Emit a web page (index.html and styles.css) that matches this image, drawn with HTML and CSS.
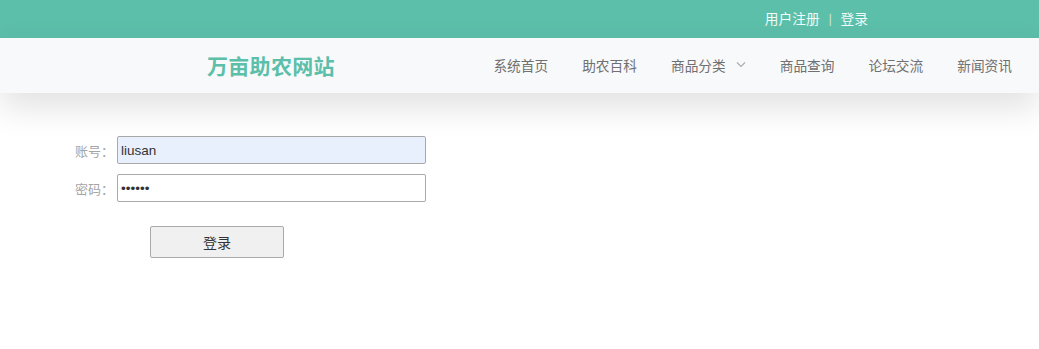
FILE: index.html
```html
<!DOCTYPE html>
<html lang="zh-CN">
<head>
    <meta charset="UTF-8">
    <meta name="viewport" content="width=device-width, initial-scale=1.0">
    <title>万亩助农网站 - 登录</title>
    <link rel="stylesheet" href="styles.css">
</head>
<body>

<div class="topbar">
    <a href="#">用户注册</a>
    <span class="sep">|</span>
    <a href="#">登录</a>
</div>

<header class="navbar">
    <div class="logo">万亩助农网站</div>
    <nav class="menu">
        <a href="#">系统首页</a>
        <a href="#">助农百科</a>
        <a href="#" class="has-sub">商品分类
            <svg width="10" height="7" viewBox="0 0 10 7"><path d="M1 1.5 L5 5.5 L9 1.5" fill="none" stroke="#aaa" stroke-width="1.1"/></svg>
        </a>
        <a href="#">商品查询</a>
        <a href="#">论坛交流</a>
        <a href="#">新闻资讯</a>
    </nav>
</header>

<div class="main">
    <form class="login-form">
        <div class="row">
            <label for="user">账号：</label>
            <input type="text" id="user" class="autofill" value="liusan">
        </div>
        <div class="row">
            <label for="pwd">密码：</label>
            <input type="password" id="pwd" value="123456">
        </div>
        <button type="button" class="btn">登录</button>
    </form>
</div>

</body>
</html>
```

FILE: styles.css
```css
body {
    margin: 0;
    padding: 0;
    background-color: #fff;
    font-family: "Noto Sans CJK SC", "Liberation Sans", sans-serif;
    overflow: hidden;
}

a {
    text-decoration: none;
}

.topbar {
    box-sizing: border-box;
    height: 38px;
    padding: 0 171px 2px 0;
    background-color: #5cbfaa;
    display: flex;
    align-items: center;
    justify-content: flex-end;
    font-size: 13.7px;
    line-height: 34px;
}

.topbar a {
    color: #f2fbf8;
}

.topbar .sep {
    color: #e4f5f0;
    margin: 0 9px;
    font-size: 11px;
}

.navbar {
    box-sizing: border-box;
    height: 55px;
    padding-bottom: 2px;
    background-color: #f8f9fb;
    display: flex;
    align-items: center;
    box-shadow: 0 14px 34px rgba(0, 0, 0, 0.12);
    position: relative;
}

.logo {
    margin-left: 207px;
    font-size: 21px;
    font-weight: bold;
    color: #5cbfaa;
    letter-spacing: 0.3px;
    line-height: 50px;
}

.menu {
    margin-left: auto;
    margin-right: 27px;
    display: flex;
    align-items: center;
    gap: 34px;
    line-height: 50px;
}

.menu a {
    color: #707070;
    font-size: 13.7px;
    display: flex;
    align-items: center;
}

.menu .has-sub svg {
    margin-left: 10px;
}

.main {
    padding: 43px 0 0 75px;
}

.row {
    display: flex;
    align-items: center;
    margin-bottom: 10px;
}

.row label {
    width: 42px;
    font-size: 13px;
    color: #a5a5a5;
}

.row input {
    box-sizing: border-box;
    width: 309px;
    height: 28px;
    padding: 0 3px;
    border: 1px solid #a9a9a9;
    border-radius: 2px;
    font-size: 13.5px;
    font-family: "Liberation Sans", sans-serif;
    color: #333;
    outline: none;
    background: #fff;
}

.row input.autofill {
    background-color: #e8f0fe;
}

.btn {
    margin: 14px 0 0 75px;
    width: 134px;
    height: 32px;
    background-color: #f0f0f0;
    border: 1px solid #aaa;
    border-radius: 2px;
    font-size: 14px;
    font-family: "Noto Sans CJK SC", sans-serif;
    color: #333;
}
```
